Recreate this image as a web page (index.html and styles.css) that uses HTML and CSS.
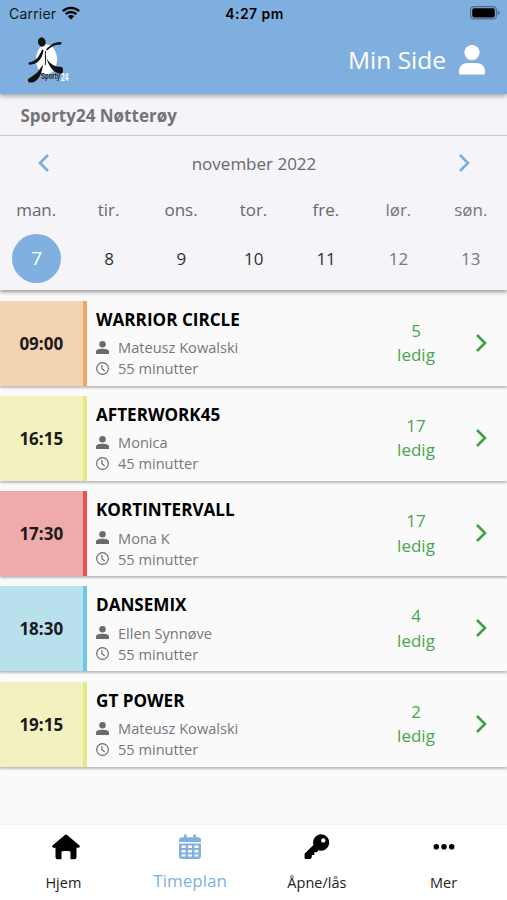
FILE: index.html
```html
<!DOCTYPE html>
<html lang="no">
<head>
  <meta charset="UTF-8">
  <meta name="viewport" content="width=device-width, initial-scale=1">
  <title>Timeplan</title>
  <link rel="stylesheet" href="styles.css">
</head>
<body>
  <!-- icons -->
  <svg class="sprite" aria-hidden="true">
    <symbol id="person" viewBox="0 0 26 30">
      <circle cx="13" cy="7.6" r="7.6"/>
      <path d="M0 28V26.500C0 21 4 18 8.500 18h9C22 18 26 21 26 26.500V28Q26 29.500 24.500 29.500h-23Q0 29.500 0 28z"/>
    </symbol>
    <symbol id="user" viewBox="0 0 12 12">
      <circle cx="6" cy="3" r="3"/>
      <path d="M0 12v-2.300C0 8 3 7.200 6 7.200s6 .8 6 2.500V12z"/>
    </symbol>
    <symbol id="clock" viewBox="0 0 12 12">
      <path d="M6 .6a5.400 5.400 0 1 0 0 10.800A5.400 5.400 0 1 0 6 .6zM5.500 3v3.200L7.800 8" fill="none" stroke="currentColor" stroke-width="1.100" stroke-linecap="round"/>
    </symbol>
    <symbol id="chevron" viewBox="0 0 12 20">
      <path d="M2 2l8 8-8 8" fill="none" stroke="currentColor" stroke-width="2.600"/>
    </symbol>
  </svg>

  <div class="app">
    <header class="header">
      <div class="status">
        <div class="carrier">Carrier
          <svg class="wifi" viewBox="0 0 18 14" fill="none" stroke="#000" stroke-width="2.400">
            <path d="M.9 5.200a11.500 11.500 0 0 1 16.200 0M3.700 8.200a7.500 7.500 0 0 1 10.600 0" fill="none"/>
            <path d="M5.800 10.300a4.500 4.500 0 0 1 6.400 0L9 13.600z" fill="#000" stroke="none"/>
          </svg>
        </div>
        <div class="time">4:27 pm</div>
        <svg class="battery" viewBox="0 0 30 14">
          <rect x=".6" y=".6" width="25.800" height="12.300" rx="3.500" fill="none" stroke="#4e6c89" stroke-width="1.200"/>
          <rect x="2.200" y="2.200" width="22.600" height="9.200" rx="1.800"/>
          <path d="M27.700 4.500q2 .8 2 2.300t-2 2.300z" fill="#4e6c89"/>
        </svg>
      </div>
      <div class="topbar">
        <svg class="logo" viewBox="0 0 46 48">
          <ellipse cx="20.500" cy="24.500" rx="10.500" ry="15" fill="#fff"/>
          <g fill="#111">
            <ellipse cx="15.800" cy="7" rx="3.800" ry="4.700" transform="rotate(-12 15.800 7)"/>
            <path d="M20 14.500c4-4 9-8 15-7.300 1.200.8.500 2.400-1.500 2.600-5.500-.2-8.500 2.200-12.500 5.700z"/>
            <path d="M17.500 15c-1 9-6 14-13.500 14.800-2-.3-2-2-.3-2.600C9.500 26.500 13 22 16 14.500z"/>
            <path d="M20.500 23c3 5.500 7 8.500 13 8.800 4.500-1 4 4.500 2.500 7.200-6 0-12.500-4.500-15.500-16z"/>
            <path d="M17 30c-1 8-4 15-9.500 17.200-4 1.200-6.500-.5-5.500-3C4.500 41.500 10 41 16 31z"/>
          </g>
          <path d="M19.500 16c-.6 4 .7 10-.3 14" fill="none" stroke="#111"/>
          <text x="15" y="43.500" class="logo-name" textLength="19" lengthAdjust="spacingAndGlyphs">Sporty</text>
          <text x="35" y="45.500" class="logo-num" textLength="7.500" lengthAdjust="spacingAndGlyphs">24</text>
        </svg>
        <div class="my-page">
          <span>Min Side</span>
          <svg><use href="#person"/></svg>
        </div>
      </div>
    </header>

    <div class="club">Sporty24 Nøtterøy</div>

    <section class="calendar">
      <div class="month">
        <svg class="prev"><use href="#chevron"/></svg>
        <span>november 2022</span>
        <svg><use href="#chevron"/></svg>
      </div>
      <div class="week names">
        <span>man.</span><span>tir.</span><span>ons.</span><span>tor.</span><span>fre.</span><span class="weekend">lør.</span><span class="weekend">søn.</span>
      </div>
      <div class="week dates">
        <span class="selected">7</span><span>8</span><span>9</span><span>10</span><span>11</span><span class="weekend">12</span><span class="weekend">13</span>
      </div>
    </section>

    <main class="list">
      <article class="class-row orange">
        <div class="start">09:00</div>
        <div class="info">
          <h2>WARRIOR CIRCLE</h2>
          <p><svg><use href="#user"/></svg>Mateusz Kowalski</p>
          <p><svg><use href="#clock"/></svg>55 minutter</p>
        </div>
        <div class="free">5<br>ledig</div>
        <svg class="go"><use href="#chevron"/></svg>
      </article>
      <article class="class-row yellow">
        <div class="start">16:15</div>
        <div class="info">
          <h2>AFTERWORK45</h2>
          <p><svg><use href="#user"/></svg>Monica</p>
          <p><svg><use href="#clock"/></svg>45 minutter</p>
        </div>
        <div class="free">17<br>ledig</div>
        <svg class="go"><use href="#chevron"/></svg>
      </article>
      <article class="class-row red">
        <div class="start">17:30</div>
        <div class="info">
          <h2>KORTINTERVALL</h2>
          <p><svg><use href="#user"/></svg>Mona K</p>
          <p><svg><use href="#clock"/></svg>55 minutter</p>
        </div>
        <div class="free">17<br>ledig</div>
        <svg class="go"><use href="#chevron"/></svg>
      </article>
      <article class="class-row blue">
        <div class="start">18:30</div>
        <div class="info">
          <h2>DANSEMIX</h2>
          <p><svg><use href="#user"/></svg>Ellen Synnøve</p>
          <p><svg><use href="#clock"/></svg>55 minutter</p>
        </div>
        <div class="free">4<br>ledig</div>
        <svg class="go"><use href="#chevron"/></svg>
      </article>
      <article class="class-row yellow">
        <div class="start">19:15</div>
        <div class="info">
          <h2>GT POWER</h2>
          <p><svg><use href="#user"/></svg>Mateusz Kowalski</p>
          <p><svg><use href="#clock"/></svg>55 minutter</p>
        </div>
        <div class="free">2<br>ledig</div>
        <svg class="go"><use href="#chevron"/></svg>
      </article>
    </main>

    <nav class="tabs">
      <a class="tab home">
        <svg viewBox="0 0 28 26">
          <path d="M12.900.9q1.100-.9 2.200 0L27.200 11.300c1.200 1.200.6 2.500-.8 2.500H24.500v9.400q0 2-2 2h-4v-6.700q0-1.500-1.500-1.500h-6q-1.500 0-1.500 1.500v6.700h-4q-2 0-2-2v-9.400H1.600c-1.400 0-2-1.300-.8-2.500z"/>
        </svg>
        <span>Hjem</span>
      </a>
      <a class="tab active">
        <svg viewBox="0 0 28 26">
          <path fill-rule="evenodd" d="M6 3.300h2V1.500a1.300 1.300 0 0 1 2.600 0v1.800h6.800V1.500a1.300 1.300 0 0 1 2.600 0v1.800h2q3 0 3 3V8H3V6.300q0-3 3-3zM3 9.600h22V22q0 3-3 3H6q-3 0-3-3zM5.600 11.500v2.500h4v-2.500zM12 11.500v2.500h4v-2.500zM18.400 11.500v2.500h4v-2.500zM5.600 16v2.500h4V16zM12 16v2.500h4V16zM18.400 16v2.500h4V16zM5.600 20.500V22.600h4v-2.100zM12 20.500v2.100h4v-2.100zM18.400 20.500v2.100h4v-2.100z"/>
        </svg>
        <span>Timeplan</span>
      </a>
      <a class="tab">
        <svg viewBox="0 0 28 26">
          <path fill-rule="evenodd" d="M18.200.3a8.200 8.200 0 1 1-2.600 16l-2 2h-2.300v2.600H8.800v2.600L7.400 25H2.600q-1 0-1-1v-4.200l8.800-8.800A8.200 8.200 0 0 1 18.200.3zM20.300 4.200a2.200 2.200 0 1 0 0 4.400 2.200 2.200 0 0 0 0-4.400z"/>
        </svg>
        <span>Åpne/lås</span>
      </a>
      <a class="tab">
        <svg viewBox="0 0 28 26">
          <circle cx="6.300" cy="12.700" r="2.800"/>
          <circle cx="14" cy="12.700" r="2.800"/>
          <circle cx="21.700" cy="12.700" r="2.800"/>
        </svg>
        <span>Mer</span>
      </a>
    </nav>
  </div>
</body>
</html>
```
FILE: styles.css
```css
* { margin: 0; padding: 0; box-sizing: border-box; }
body {
  background: #fafafa;
  font-family: "Open Sans", sans-serif;
  color: #111;
}
svg { display: block; flex: none; fill: currentColor; }
.sprite { position: absolute; width: 0; height: 0; }
.app {
  height: 100vh;
  display: flex;
  flex-direction: column;
  overflow: hidden;
}

/* header */
.header {
  height: 94px;
  flex: none;
  background: #7fafdf;
  box-shadow: 0 2px 5px rgba(0,0,0,0.35);
  position: relative;
}
.status {
  height: 27px;
  padding: 0 7px 0 9px;
  display: grid;
  grid-template-columns: 1fr auto 1fr;
  align-items: center;
  font-family: Inter, sans-serif;
  font-size: 14px;
  color: #101820;
}
.carrier { display: flex; align-items: center; gap: 6px; letter-spacing: 0.2px; }
.wifi { width: 18px; height: 14px; margin-top: -2px; }
.time { font-weight: 600; color: #000; letter-spacing: 0.45px; }
.battery { width: 30px; height: 14px; justify-self: end; color: #000; margin-top: -1px; }
.topbar {
  height: 67px;
  padding: 0 22px 0 26px;
  display: flex;
  justify-content: space-between;
}
.logo { width: 46px; height: 48px; margin-top: 8px; overflow: visible; }
.logo-name { font: bold 9.5px "Liberation Sans", sans-serif; fill: #222; }
.logo-num { font: bold 10px "Liberation Sans", sans-serif; fill: #fff; }
.my-page {
  height: 65px;
  display: flex;
  align-items: center;
  gap: 13px;
  color: #fff;
  font-size: 24.5px;
}
.my-page svg { width: 26px; height: 30px; }

.club {
  height: 42px;
  flex: none;
  padding-left: 20.5px;
  background: #f4f4f9;
  border-bottom: 1px solid #d2d2d6;
  line-height: 44px;
  font-size: 17px;
  font-weight: bold;
  color: #747478;
}

/* calendar */
.calendar {
  height: 154px;
  flex: none;
  background: #f4f4f9;
  box-shadow: 0 2px 4px rgba(0,0,0,0.4);
  color: #68686c;
  font-size: 17px;
}
.month {
  height: 54px;
  padding: 0 37px 0 38px;
  display: flex;
  justify-content: space-between;
  align-items: center;
}
.month svg { width: 12px; height: 20px; color: #78afe0; }
.month .prev { transform: scaleX(-1); }
.week {
  display: grid;
  grid-template-columns: repeat(7, 1fr);
  justify-items: center;
  align-items: center;
}
.names { height: 38px; }
.dates { height: 61px; padding-left: 0.5px; color: #303033; }
.week .weekend { color: #77777b; }
.selected {
  width: 49px;
  height: 49px;
  border-radius: 50%;
  background: #7fb0df;
  color: #fff;
  font-size: 19px;
  line-height: 49px;
  text-align: center;
}

/* class list */
.list {
  flex: 1;
  padding-top: 10.6px;
  display: flex;
  flex-direction: column;
  gap: 10.3px;
}
.class-row {
  height: 85px;
  flex: none;
  display: flex;
  background: #fafafa;
  box-shadow: 0 2px 2px rgba(0,0,0,0.25);
}
.start {
  width: 86.5px;
  border-right: 4.5px solid;
  display: flex;
  align-items: center;
  justify-content: center;
  font-size: 17px;
  font-weight: bold;
  color: #1c1a1a;
}
.orange .start { background: #f3d3b2; border-color: #efa765; }
.yellow .start { background: #f2f2c0; border-color: #e6e884; }
.red .start { background: #efaaac; border-color: #e5554f; }
.blue .start { background: #b8e1ed; border-color: #6fc7e6; }
.info { flex: 1; padding: 7px 0 0 9.5px; }
.info h2 {
  font-size: 17.1px;
  line-height: 24px;
  color: #000;
  margin-bottom: 5px;
}
.info p {
  display: flex;
  align-items: center;
  gap: 9px;
  height: 21px;
  font-size: 14.6px;
  color: #77777a;
}
.info svg { width: 13px; height: 13px; color: #6b6b6d; }
.free {
  width: 60px;
  padding-top: 18px;
  text-align: center;
  font-size: 17px;
  line-height: 24.5px;
  color: #48a64c;
}
.go {
  width: 12px;
  height: 20px;
  margin: 32px 20px 0 29px;
  color: #3fa045;
}

/* bottom tabs */
.tabs {
  height: 76px;
  flex: none;
  background: #fff;
  border-top: 1px solid #f3f3f3;
  display: grid;
  grid-template-columns: repeat(4, 1fr);
}
.tab {
  display: flex;
  flex-direction: column;
  align-items: center;
  padding-top: 9px;
  font-size: 14.5px;
  color: #222;
}
.tab svg { width: 28px; height: 26px; color: #000; }
.tab span { line-height: 20px; margin-top: 13px; }
.home svg { margin-left: 5px; }
.tab.active, .active svg { color: #80b1e1; }
.tab.active span { font-size: 17px; margin-top: 11px; }
```
